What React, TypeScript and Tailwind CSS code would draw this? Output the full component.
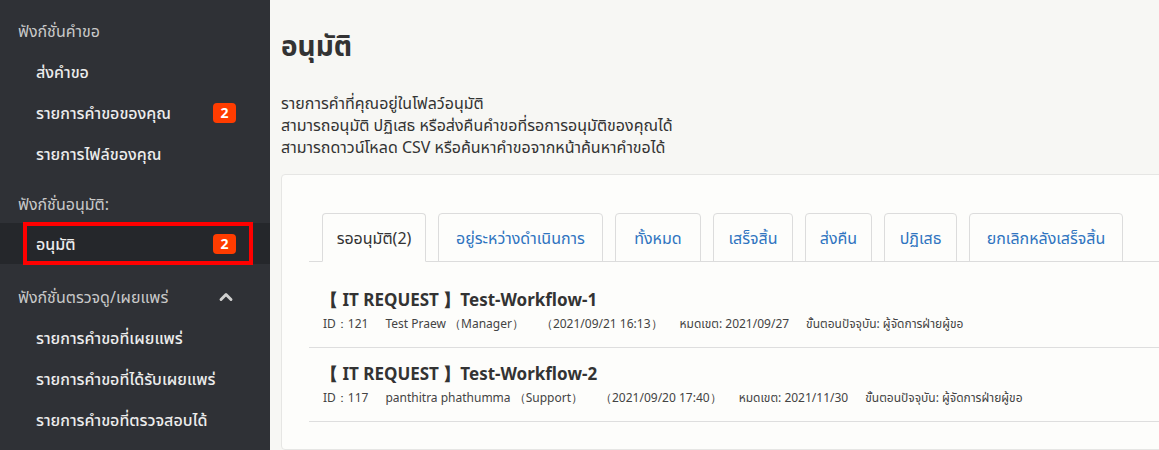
import { ChevronUp } from "lucide-react";

const font = { fontFamily: '"Noto Sans", "Noto Sans Thai", "Liberation Sans", sans-serif' };

function Badge({ n }: { n: number }) {
  return (
    <span className="ml-auto mr-[34px] flex h-[20px] w-[23px] items-center justify-center rounded-[4px] bg-[#ff3c00] text-[14px] font-bold text-white">
      {n}
    </span>
  );
}

function SideItem({ label, badge }: { label: string; badge?: number }) {
  return (
    <div className="flex h-[41px] items-center pl-[36px] text-[16px] font-medium text-[#ececec]">
      <span>{label}</span>
      {badge !== undefined && <Badge n={badge} />}
    </div>
  );
}

function SideHeading({ label, chevron }: { label: string; chevron?: boolean }) {
  return (
    <div className="flex h-[41px] items-center pl-[18px] pr-[34px] text-[16px] text-[#c9c9c9]">
      <span>{label}</span>
      {chevron && <ChevronUp className="ml-auto h-5 w-5 text-[#d0d0d0]" strokeWidth={3.5} />}
    </div>
  );
}

const tabs = [
  { label: "รออนุมัติ(2)", w: "w-[104px]" },
  { label: "อยู่ระหว่างดำเนินการ", w: "w-[165px]" },
  { label: "ทั้งหมด", w: "w-[86px]" },
  { label: "เสร็จสิ้น", w: "w-[80px]" },
  { label: "ส่งคืน", w: "w-[67px]" },
  { label: "ปฏิเสธ", w: "w-[73px]" },
  { label: "ยกเลิกหลังเสร็จสิ้น", w: "w-[154px]" },
];

const rows = [
  {
    title: "Test-Workflow-1",
    id: "121",
    user: "Test Praew",
    role: "Manager",
    at: "2021/09/21 16:13",
    due: "2021/09/27",
  },
  {
    title: "Test-Workflow-2",
    id: "117",
    user: "panthitra phathumma",
    role: "Support",
    at: "2021/09/20 17:40",
    due: "2021/11/30",
  },
];

export default function App() {
  return (
    <div className="flex h-[450px] w-[1159px] overflow-hidden bg-[#f7f7f4]" style={font}>
      {/* Sidebar */}
      <aside className="flex w-[270px] shrink-0 flex-col bg-[#2f3136] pt-[10px]">
        <SideHeading label="ฟังก์ชั่นคำขอ" />
        <SideItem label="ส่งคำขอ" />
        <SideItem label="รายการคำขอของคุณ" badge={2} />
        <SideItem label="รายการไฟล์ของคุณ" />
        <div className="h-[9px]" />
        <SideHeading label="ฟังก์ชั่นอนุมัติ:" />
        <div className="relative mt-[-1px] bg-[#25272b]">
          <SideItem label="อนุมัติ" badge={2} />
          <div className="pointer-events-none absolute left-[23px] top-[-1px] h-[43px] w-[230px] border-[4px] border-[#ff0000]" />
        </div>
        <div className="h-[12px]" />
        <SideHeading label="ฟังก์ชั่นตรวจดู/เผยแพร่" chevron />
        <SideItem label="รายการคำขอที่เผยแพร่" />
        <SideItem label="รายการคำขอที่ได้รับเผยแพร่" />
        <SideItem label="รายการคำขอที่ตรวจสอบได้" />
      </aside>

      {/* Main */}
      <main className="flex min-w-0 flex-1 flex-col pl-[11px] pt-[26px] text-[#333]">
        <h1 className="text-[28px] font-bold leading-[38px] text-[#333]">อนุมัติ</h1>
        <div className="mt-[28px] text-[16px] leading-[22px] text-[#333]">
          <p>รายการคำที่คุณอยู่ในโฟลว์อนุมัติ</p>
          <p>สามารถอนุมัติ ปฏิเสธ หรือส่งคืนคำขอที่รอการอนุมัติของคุณได้</p>
          <p>สามารถดาวน์โหลด CSV หรือค้นหาคำขอจากหน้าค้นหาคำขอได้</p>
        </div>

        <section className="mt-[16px] w-[920px] flex-1 rounded-[4px] border border-[#e6e6e4] bg-[#fdfdfb] pl-[27px] pt-[38px]">
          <div className="mb-[12px] flex gap-[12px] border-b border-[#dcdcdc] pl-[13px]">
            {tabs.map((t, i) => (
              <div
                key={t.label}
                className={`-mb-px flex h-[49px] items-center justify-center rounded-t-[4px] border text-[16px] ${t.w} ${
                  i === 0
                    ? "border-[#dcdcdc] border-b-[#fdfdfb] bg-[#fdfdfb] text-[#333]"
                    : "border-[#dcdcdc] text-[#2f74c0]"
                }`}
              >
                {t.label}
              </div>
            ))}
          </div>

          {rows.map((r) => (
            <div key={r.id} className="border-b border-[#dedede] pb-[12px] pl-[14px] pt-[14px]">
              <div className="-ml-[2px] text-[17px] font-bold leading-[24px] text-[#333]">
                【 IT REQUEST 】{r.title}
              </div>
              <div className="mt-[1px] flex gap-[17px] whitespace-nowrap text-[12px] leading-[22px] text-[#444]">
                <span>ID：{r.id}</span>
                <span>{r.user} （{r.role}）</span>
                <span>（{r.at}）</span>
                <span>หมดเขต: {r.due}</span>
                <span>ขั้นตอนปัจจุบัน: ผู้จัดการฝ่ายผู้ขอ</span>
              </div>
            </div>
          ))}
        </section>
      </main>
    </div>
  );
}
